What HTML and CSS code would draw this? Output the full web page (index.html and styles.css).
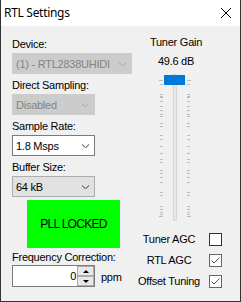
FILE: index.html
```html
<!DOCTYPE html>
<html>
<head>
<meta charset="utf-8">
<link rel="stylesheet" href="styles.css">
</head>
<body>
<div class="window">
  <div class="titlebar">
    <span class="title">RTL Settings</span>
    <svg class="close" width="10" height="10" viewBox="0 0 10 10"><path d="M0 0L10 10M10 0L0 10" stroke="#000" stroke-width="1" fill="none"/></svg>
  </div>
  <div class="content">
    <div class="left">
      <div class="label first">Device:</div>
      <div class="combo wide disabled"><span class="val">(1) - RTL2838UHIDI</span><svg width="7" height="4" viewBox="0 0 7 4"><polyline points="0,0.5 3.5,3.8 7,0.5" fill="none" stroke="currentColor" stroke-width="1"/></svg></div>
      <div class="label">Direct Sampling:</div>
      <div class="combo disabled"><span class="val">Disabled</span><svg width="7" height="4" viewBox="0 0 7 4"><polyline points="0,0.5 3.5,3.8 7,0.5" fill="none" stroke="currentColor" stroke-width="1"/></svg></div>
      <div class="label">Sample Rate:</div>
      <div class="combo edit"><span class="val">1.8 Msps</span><svg width="7" height="4" viewBox="0 0 7 4"><polyline points="0,0.5 3.5,3.8 7,0.5" fill="none" stroke="currentColor" stroke-width="1"/></svg></div>
      <div class="label">Buffer Size:</div>
      <div class="combo list"><span class="val">64 kB</span><svg width="7" height="4" viewBox="0 0 7 4"><polyline points="0,0.5 3.5,3.8 7,0.5" fill="none" stroke="currentColor" stroke-width="1"/></svg></div>
      <div class="pll">PLL LOCKED</div>
      <div class="label freq">Frequency Correction:</div>
      <div class="numeric">
        <div class="spinbox">
          <span class="num">0</span>
          <div class="spin">
            <div class="sbtn"><i class="up"></i></div>
            <div class="sbtn"><i class="down"></i></div>
          </div>
        </div>
        <span class="ppm">ppm</span>
      </div>
    </div>
    <div class="right">
      <div class="gain-title">Tuner Gain</div>
      <div class="gain-value">49.6 dB</div>
      <div class="slider">
        <div class="track"></div>
        <i class="tick end" style="top:8px"></i>
        <i class="tick" style="top:12px"></i>
        <i class="tick" style="top:22px"></i>
        <i class="tick" style="top:24px"></i>
        <i class="tick" style="top:25px"></i>
        <i class="tick" style="top:29px"></i>
        <i class="tick" style="top:34px"></i>
        <i class="tick" style="top:38px"></i>
        <i class="tick" style="top:42px"></i>
        <i class="tick" style="top:44px"></i>
        <i class="tick" style="top:51px"></i>
        <i class="tick" style="top:54px"></i>
        <i class="tick" style="top:63px"></i>
        <i class="tick" style="top:67px"></i>
        <i class="tick" style="top:74px"></i>
        <i class="tick" style="top:81px"></i>
        <i class="tick" style="top:87px"></i>
        <i class="tick" style="top:90px"></i>
        <i class="tick" style="top:98px"></i>
        <i class="tick" style="top:101px"></i>
        <i class="tick" style="top:105px"></i>
        <i class="tick" style="top:110px"></i>
        <i class="tick" style="top:120px"></i>
        <i class="tick" style="top:123px"></i>
        <i class="tick" style="top:134px"></i>
        <i class="tick" style="top:137px"></i>
        <i class="tick" style="top:140px"></i>
        <i class="tick" style="top:142px"></i>
        <i class="tick end" style="top:144px"></i>
        <div class="thumb"></div>
      </div>
      <div class="checks">
        <span>Tuner AGC</span><div class="cb"></div>
        <span>RTL AGC</span><div class="cb on"><svg width="11" height="11" viewBox="0 0 11 11"><polyline points="1.5,5.5 4,8 9.5,2.5" fill="none" stroke="#555" stroke-width="1"/></svg></div>
        <span>Offset Tuning</span><div class="cb on"><svg width="11" height="11" viewBox="0 0 11 11"><polyline points="1.5,5.5 4,8 9.5,2.5" fill="none" stroke="#555" stroke-width="1"/></svg></div>
      </div>
    </div>
  </div>
</div>
</body>
</html>
```

FILE: styles.css
```css
* { box-sizing: border-box; }
body {
  margin: 0;
  font-family: "Liberation Sans", Arial, sans-serif;
  font-size: 11px;
  letter-spacing: -0.25px;
  color: #000;
  background: #fff;
}
.window {
  width: 241px;
  height: 302px;
  border: 1px solid #333;
  border-top: none;
  display: flex;
  flex-direction: column;
  background: #f0f0f0;
}
.titlebar {
  height: 26px;
  flex: none;
  background: #fff;
  display: flex;
  align-items: center;
  padding: 0 9px 1px 3px;
}
.title {
  font-family: "Noto Sans", "Open Sans", sans-serif;
  font-size: 12px;
  letter-spacing: -0.3px;
}
.close { margin-left: auto; display: block; }
.content { flex: 1; display: flex; }
.left {
  width: 131px;
  padding: 11px 0 0 11px;
  display: flex;
  flex-direction: column;
}
.label {
  height: 14px;
  line-height: 14px;
  white-space: nowrap;
  margin-top: 4px;
}
.label.first { margin-top: 0; }
.combo {
  height: 21px;
  width: 83px;
  margin-top: 2px;
  display: flex;
  align-items: center;
  padding-left: 3px;
  border: 1px solid #7a7a7a;
  white-space: nowrap;
}
.combo.wide { width: 120px; }
.combo .val { flex: 1; }
.combo svg { margin-right: 5px; display: block; }
.combo.disabled { background: #cccccc; border-color: #cccccc; color: #838383; }
.combo.disabled svg { color: #a6a6a6; }
.combo.edit { background: #fff; border-color: #7a7a7a; }
.combo.edit svg, .combo.list svg { color: #333; }
.combo.list { background: #e1e1e1; border-color: #adadad; }
.pll {
  margin: 3px 0 0 15px;
  width: 93px;
  height: 48px;
  background: #00ff00;
  display: flex;
  align-items: center;
  justify-content: center;
  font-size: 12px;
  letter-spacing: -0.7px;
  white-space: nowrap;
}
.label.freq { margin-top: 2px; }
.numeric { margin-top: 1px; display: flex; align-items: flex-start; }
.spinbox {
  width: 83px;
  height: 22px;
  border: 1px solid #7a7a7a;
  background: #fff;
  display: flex;
}
.num { flex: 1; text-align: right; line-height: 20px; padding-right: 1px; }
.spin { width: 17px; display: flex; flex-direction: column; }
.sbtn {
  height: 10px;
  background: #e8e8e8;
  border: 1px solid #adadad;
  display: flex;
  align-items: center;
  justify-content: center;
}
.up { width: 0; height: 0; border-left: 3px solid transparent; border-right: 3px solid transparent; border-bottom: 3px solid #000; }
.down { width: 0; height: 0; border-left: 3px solid transparent; border-right: 3px solid transparent; border-top: 3px solid #000; }
.ppm { margin-left: 6px; padding-top: 5px; line-height: 14px; }
.right {
  margin-left: 1px;
  width: 95px;
  padding-top: 9px;
  display: flex;
  flex-direction: column;
}
.gain-title, .gain-value { width: 86px; text-align: center; line-height: 14px; height: 14px; }
.gain-value { margin-top: 5px; }
.slider {
  position: relative;
  width: 33px;
  height: 152px;
  margin: 4px 0 0 26px;
}
.track {
  position: absolute;
  left: 14px;
  top: 2px;
  bottom: 3px;
  width: 4px;
  border: 1px solid #d6d6d6;
  background: #e7e7e7;
}
.tick { position: absolute; left: 0; width: 33px; height: 1px; }
.tick::before, .tick::after {
  content: "";
  position: absolute;
  top: 0;
  height: 1px;
  width: 3px;
  background: #bcbcbc;
}
.tick::before { left: 1px; }
.tick::after { left: 28px; }
.tick.end::before { left: 0; width: 4px; }
.tick.end::after { width: 4px; }
.thumb {
  position: absolute;
  left: 5px;
  top: 3px;
  width: 21px;
  height: 10px;
  background: #0078d7;
}
.checks {
  display: grid;
  grid-template-columns: 72px 13px;
  column-gap: 4px;
  grid-auto-rows: 21px;
  align-items: center;
  margin-top: 5px;
}
.checks span { text-align: center; line-height: 13px; white-space: nowrap; }
.cb { width: 13px; height: 13px; border: 1px solid #333; background: #fff; }
.cb.on { border-color: #666; }
.cb svg { display: block; }
```
